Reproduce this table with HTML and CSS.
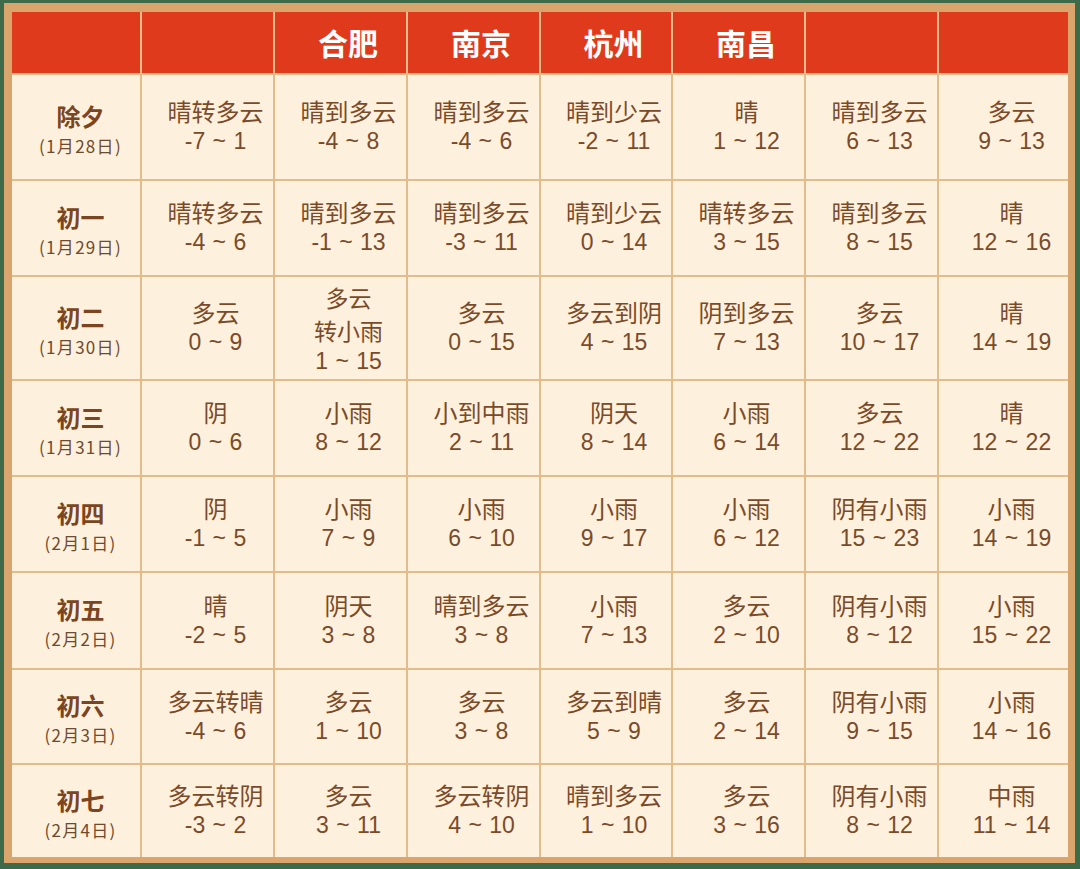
FILE: index.html
```html
<!DOCTYPE html>
<html lang="zh">
<head>
<meta charset="utf-8">
<link rel="stylesheet" href="styles.css">
</head>
<body>
<div class="frame">
  <div class="grid">
    <div class="hd"></div><div class="hd"></div><div class="hd">合肥</div><div class="hd">南京</div><div class="hd">杭州</div><div class="hd">南昌</div><div class="hd"></div><div class="hd"></div>

    <div class="day"><b>除夕</b><span>(1月28日)</span></div>
    <div class="c"><span>晴转多云</span><span class="n">-7 ~ 1</span></div><div class="c"><span>晴到多云</span><span class="n">-4 ~ 8</span></div><div class="c"><span>晴到多云</span><span class="n">-4 ~ 6</span></div><div class="c"><span>晴到少云</span><span class="n">-2 ~ 11</span></div><div class="c"><span>晴</span><span class="n">1 ~ 12</span></div><div class="c"><span>晴到多云</span><span class="n">6 ~ 13</span></div><div class="c"><span>多云</span><span class="n">9 ~ 13</span></div>

    <div class="day"><b>初一</b><span>(1月29日)</span></div>
    <div class="c"><span>晴转多云</span><span class="n">-4 ~ 6</span></div><div class="c"><span>晴到多云</span><span class="n">-1 ~ 13</span></div><div class="c"><span>晴到多云</span><span class="n">-3 ~ 11</span></div><div class="c"><span>晴到少云</span><span class="n">0 ~ 14</span></div><div class="c"><span>晴转多云</span><span class="n">3 ~ 15</span></div><div class="c"><span>晴到多云</span><span class="n">8 ~ 15</span></div><div class="c"><span>晴</span><span class="n">12 ~ 16</span></div>

    <div class="day"><b>初二</b><span>(1月30日)</span></div>
    <div class="c"><span>多云</span><span class="n">0 ~ 9</span></div><div class="c three"><span>多云</span><span>转小雨</span><span class="n">1 ~ 15</span></div><div class="c"><span>多云</span><span class="n">0 ~ 15</span></div><div class="c"><span>多云到阴</span><span class="n">4 ~ 15</span></div><div class="c"><span>阴到多云</span><span class="n">7 ~ 13</span></div><div class="c"><span>多云</span><span class="n">10 ~ 17</span></div><div class="c"><span>晴</span><span class="n">14 ~ 19</span></div>

    <div class="day"><b>初三</b><span>(1月31日)</span></div>
    <div class="c"><span>阴</span><span class="n">0 ~ 6</span></div><div class="c"><span>小雨</span><span class="n">8 ~ 12</span></div><div class="c"><span>小到中雨</span><span class="n">2 ~ 11</span></div><div class="c"><span>阴天</span><span class="n">8 ~ 14</span></div><div class="c"><span>小雨</span><span class="n">6 ~ 14</span></div><div class="c"><span>多云</span><span class="n">12 ~ 22</span></div><div class="c"><span>晴</span><span class="n">12 ~ 22</span></div>

    <div class="day"><b>初四</b><span>(2月1日)</span></div>
    <div class="c"><span>阴</span><span class="n">-1 ~ 5</span></div><div class="c"><span>小雨</span><span class="n">7 ~ 9</span></div><div class="c"><span>小雨</span><span class="n">6 ~ 10</span></div><div class="c"><span>小雨</span><span class="n">9 ~ 17</span></div><div class="c"><span>小雨</span><span class="n">6 ~ 12</span></div><div class="c"><span>阴有小雨</span><span class="n">15 ~ 23</span></div><div class="c"><span>小雨</span><span class="n">14 ~ 19</span></div>

    <div class="day"><b>初五</b><span>(2月2日)</span></div>
    <div class="c"><span>晴</span><span class="n">-2 ~ 5</span></div><div class="c"><span>阴天</span><span class="n">3 ~ 8</span></div><div class="c"><span>晴到多云</span><span class="n">3 ~ 8</span></div><div class="c"><span>小雨</span><span class="n">7 ~ 13</span></div><div class="c"><span>多云</span><span class="n">2 ~ 10</span></div><div class="c"><span>阴有小雨</span><span class="n">8 ~ 12</span></div><div class="c"><span>小雨</span><span class="n">15 ~ 22</span></div>

    <div class="day"><b>初六</b><span>(2月3日)</span></div>
    <div class="c"><span>多云转晴</span><span class="n">-4 ~ 6</span></div><div class="c"><span>多云</span><span class="n">1 ~ 10</span></div><div class="c"><span>多云</span><span class="n">3 ~ 8</span></div><div class="c"><span>多云到晴</span><span class="n">5 ~ 9</span></div><div class="c"><span>多云</span><span class="n">2 ~ 14</span></div><div class="c"><span>阴有小雨</span><span class="n">9 ~ 15</span></div><div class="c"><span>小雨</span><span class="n">14 ~ 16</span></div>

    <div class="day"><b>初七</b><span>(2月4日)</span></div>
    <div class="c"><span>多云转阴</span><span class="n">-3 ~ 2</span></div><div class="c"><span>多云</span><span class="n">3 ~ 11</span></div><div class="c"><span>多云转阴</span><span class="n">4 ~ 10</span></div><div class="c"><span>晴到多云</span><span class="n">1 ~ 10</span></div><div class="c"><span>多云</span><span class="n">3 ~ 16</span></div><div class="c"><span>阴有小雨</span><span class="n">8 ~ 12</span></div><div class="c"><span>中雨</span><span class="n">11 ~ 14</span></div>
  </div>
</div>
</body>
</html>
```

FILE: styles.css
```css
html, body {
  margin: 0;
  padding: 0;
}
body {
  width: 1080px;
  height: 869px;
  background: #3d6a48;
  overflow: hidden;
  font-family: "Noto Sans CJK SC", "Noto Sans", sans-serif;
}
.frame {
  margin: 3px 5px 0 4px;
  padding: 9px 7px 6px 8px;
  background: #d9a56c;
  height: 860px;
  box-sizing: border-box;
}
.grid {
  display: grid;
  grid-template-columns: 128px 131px 131px 131px 130px 131px 131px 129px;
  grid-template-rows: 61px 104px 94px 102px 94px 94px 95px 93px 92px;
  gap: 2px;
  background: #e3bc8c;
  width: 1056px;
  height: 845px;
}
.hd {
  background: #e03a1c;
  color: #ffffff;
  font-weight: 700;
  font-size: 30px;
  display: flex;
  align-items: center;
  justify-content: center;
  padding: 0 0 2px 15px;
  box-sizing: border-box;
}
.c, .day {
  background: #fdf0dc;
  color: #7a4b2a;
  display: flex;
  flex-direction: column;
  align-items: center;
  justify-content: center;
  text-align: center;
}
.c {
  padding: 0 0 2px 16px;
  box-sizing: border-box;
  font-size: 24px;
  line-height: 30px;
}
.c .n {
  font-family: "Liberation Sans", Arial, sans-serif;
  font-size: 23px;
  line-height: 30px;
  word-spacing: 1px;
}
.c.three span {
  font-size: 23px;
  line-height: 33.5px;
}
.c.three .n {
  line-height: 26px;
}
.day {
  padding: 5px 0 0 9px;
  box-sizing: border-box;
}
.day b {
  font-size: 24px;
  font-weight: 700;
  line-height: 32px;
  color: #7a4520;
}
.day span {
  font-size: 17px;
  line-height: 28px;
  color: #6e4a2e;
  letter-spacing: 1.3px;
}
```
